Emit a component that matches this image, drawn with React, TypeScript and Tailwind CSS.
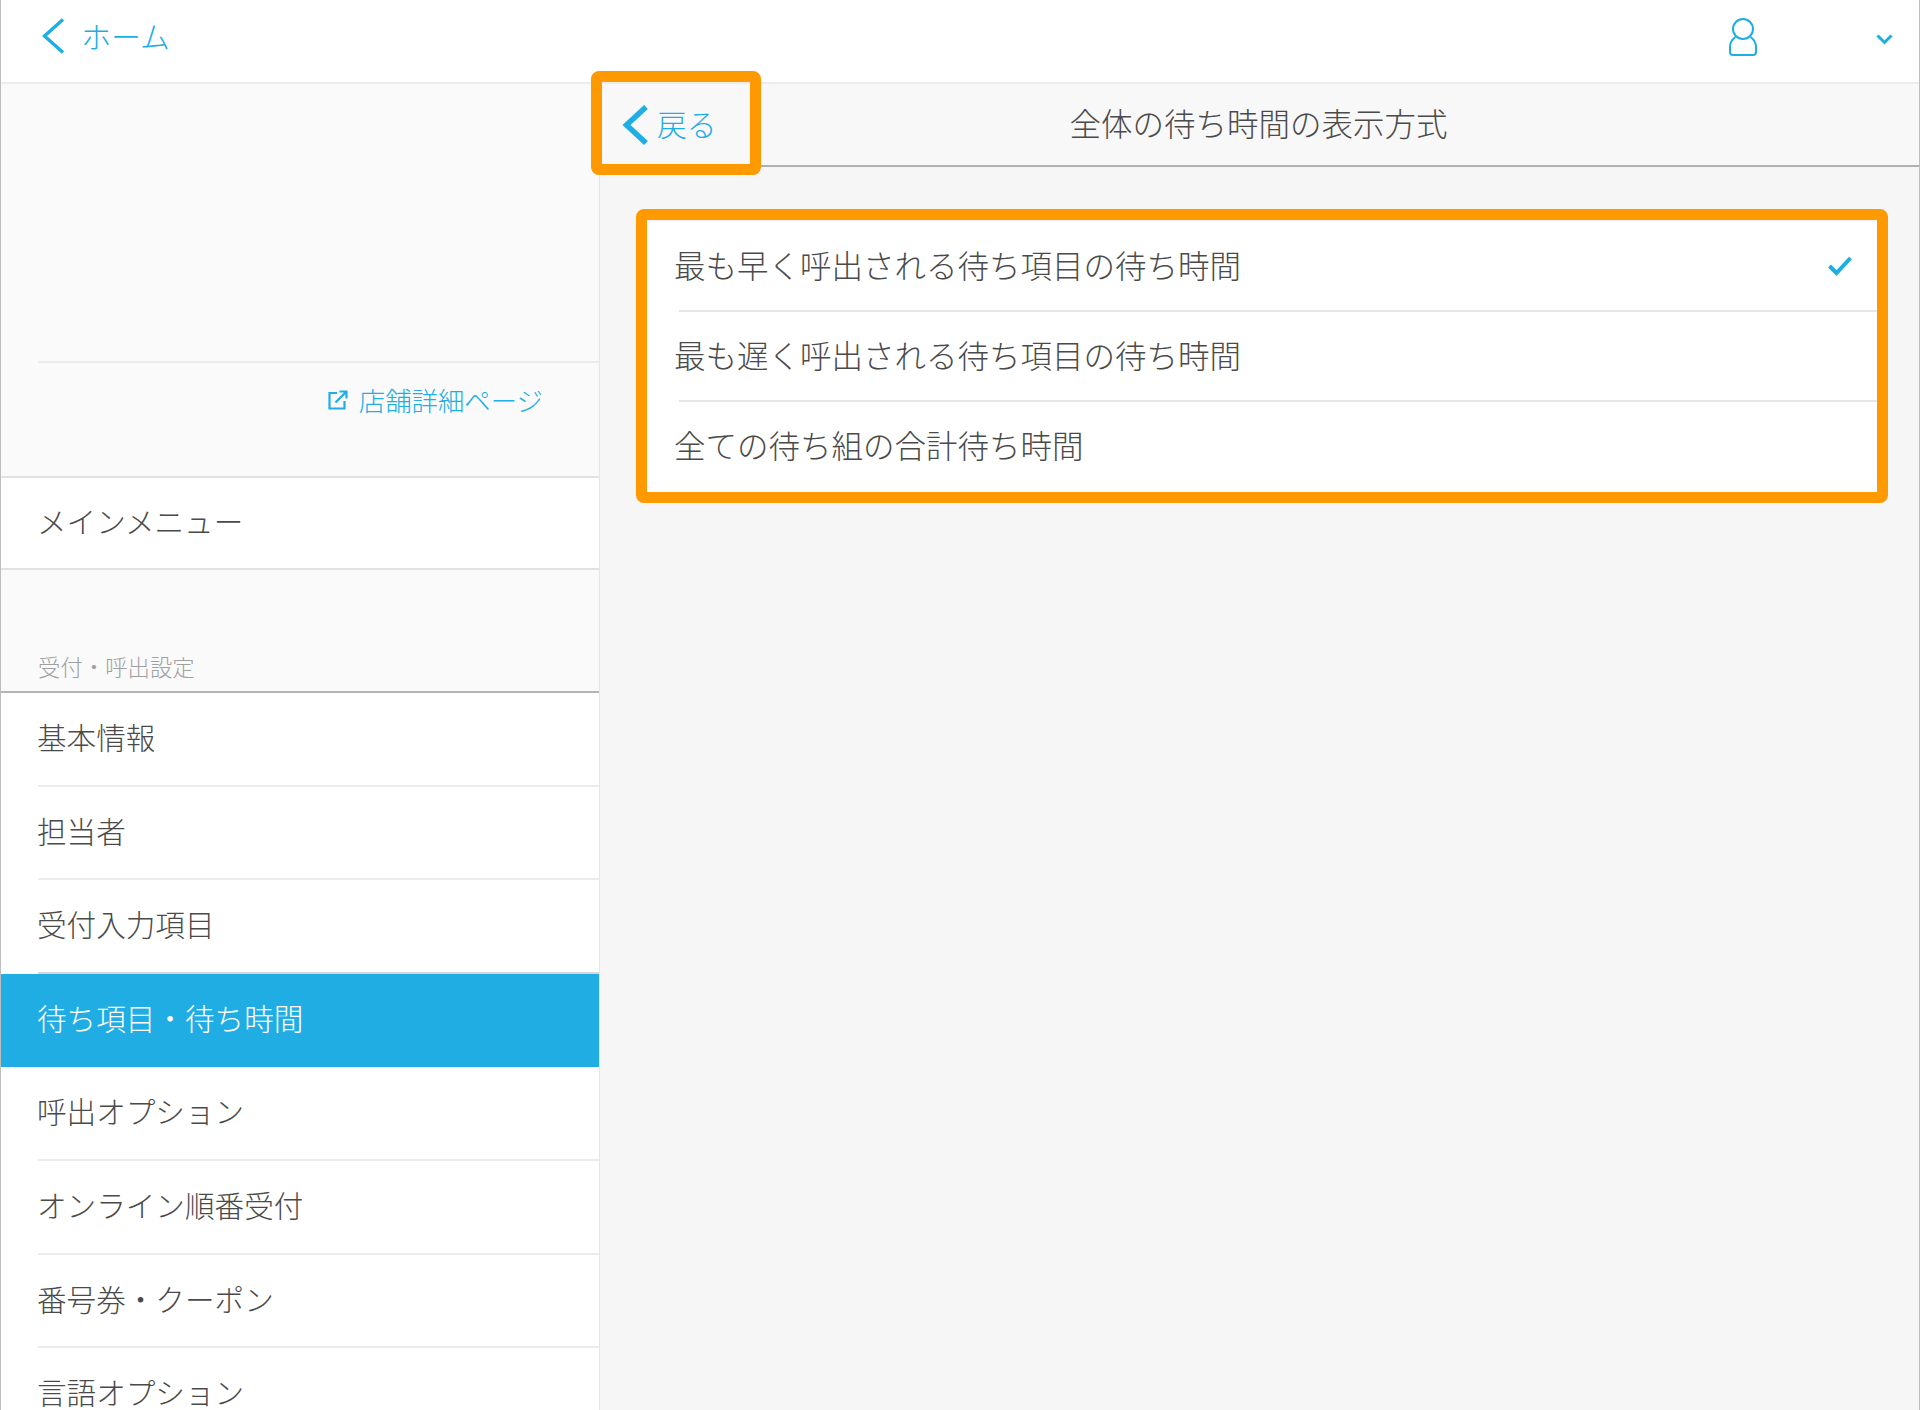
import React from "react";

const rows = ["基本情報", "担当者", "受付入力項目", "待ち項目・待ち時間", "呼出オプション", "オンライン順番受付", "番号券・クーポン", "言語オプション"];
const options = ["最も早く呼出される待ち項目の待ち時間", "最も遅く呼出される待ち項目の待ち時間", "全ての待ち組の合計待ち時間"];

export default function App() {
  return (
    <div className="relative w-[1920px] h-[1410px] overflow-hidden bg-white border-x border-[#bdbdbd] font-light text-[#4a4a4a] [font-family:'Noto_Sans_CJK_JP','Noto_Sans',sans-serif]">
      <header className="h-[84px] flex items-center justify-between border-b-2 border-[#ececec] bg-white">
        <a className="flex items-center pl-[40px] pb-[11px] text-[#1eade4] text-[30px]">
          <svg className="w-[24px] h-[36px]" viewBox="0 0 24 36" fill="none" stroke="#1eade4" strokeWidth="3.4">
            <path d="M22 1.5 L3.5 18 L22 34.5" />
          </svg>
          <span className="ml-[16px]">ホーム</span>
        </a>
        <div className="flex items-center pb-[10px]">
          <svg className="w-[32px] h-[40px] mb-[-2px]" viewBox="0 0 32 40" fill="none" stroke="#1eade4" strokeWidth="2">
            <circle cx="16" cy="12" r="10" />
            <path d="M8.5 20 C5 22.5 3 26 3 30 V35 C3 37 4 38 6 38 H26 C28 38 29 37 29 35 V30 C29 26 27 22.5 23.5 20" />
          </svg>
          <svg className="w-[17px] h-[11px] ml-[117px] mr-[26px] mt-[6px]" viewBox="0 0 17 11" fill="none" stroke="#1eade4" strokeWidth="3">
            <path d="M1.5 1.5 L8.5 8.5 L15.5 1.5" />
          </svg>
        </div>
      </header>
      <div className="flex h-[1326px]">
        <aside className="w-[599px] shrink-0 bg-[#fafafa] border-r border-[#e6e6e6] flex flex-col">
          <div className="h-[279px] shrink-0 flex flex-col justify-end">
            <div className="ml-[37px] border-b-2 border-[#ececec]" />
          </div>
          <div className="h-[113px] shrink-0 flex items-center justify-end pr-[56px] pb-[39px] text-[#1eade4] text-[26.4px]">
            <svg className="w-[20px] h-[20px] mr-[11px]" viewBox="0 0 20 20" fill="none" stroke="#1eade4" strokeWidth="2.2">
              <path d="M9 3 H1.5 V18.5 H16.5 V11" />
              <path d="M7.5 12.5 L18 2 M11.5 1.5 H18.5 V8.5" />
            </svg>
            <span>店舗詳細ページ</span>
          </div>
          <div className="h-[94px] shrink-0 bg-white border-y-2 border-[#e2e2e2] flex items-center pl-[36px] pb-[3px] text-[29.6px]">メインメニュー</div>
          <div className="h-[123px] shrink-0 flex items-end pl-[37px] pb-[7px] text-[22.4px] text-[#a0a0a0] border-b-2 border-[#b4b4b4]">受付・呼出設定</div>
          <ul className="bg-white text-[29.6px]">
            {rows.map((r, i) =>
              i === 3 ? (
                <li key={r} className="h-[93.6px] bg-[#1fade4] text-white flex items-center pl-[36px] pb-[4px]">{r}</li>
              ) : (
                <li key={r} className="h-[93.6px] flex flex-col">
                  <div className="flex-1 flex items-center pl-[36px] pb-[3px]">{r}</div>
                  <div className={i === 2 ? "ml-[37px] border-b-2 border-[#d8d8d8]" : "ml-[37px] border-b-2 border-[#ececec]"} />
                </li>
              )
            )}
          </ul>
        </aside>
        <main className="flex-1 bg-[#f6f6f6]">
          <div className="relative h-[83px] bg-[#f8f8f8] border-b-2 border-[#b0b0b0] flex items-center justify-center pb-[3px] text-[31.5px]">
            <a className="absolute left-[22px] top-[17px] flex items-center text-[#1eade4] text-[29.8px]">
              <svg className="w-[26px] h-[40px]" viewBox="0 0 26 40" fill="none" stroke="#1eade4" strokeWidth="5.5">
                <path d="M24 2 L4.5 20 L24 38" />
              </svg>
              <span className="ml-[9px] mb-[4px]">戻る</span>
            </a>
            <span className="-ml-[2px]">全体の待ち時間の表示方式</span>
          </div>
          <ul className="mt-[55px] ml-[47px] mr-[41px] bg-white text-[31.5px]">
            {options.map((o, i) => (
              <li key={o} className="h-[90px] flex flex-col">
                <div className={i === 2 ? "flex-1 flex items-center justify-between pl-[27px] pr-[26px] pb-[5px]" : "flex-1 flex items-center justify-between pl-[27px] pr-[26px] pb-[3px]"}>
                  <span>{o}</span>
                  {i === 0 && (
                    <svg className="w-[24px] h-[20px] mt-[2px]" viewBox="0 0 24 20" fill="none" stroke="#1eade4" strokeWidth="4">
                      <path d="M1.5 10 L8.5 17 L22.5 2" />
                    </svg>
                  )}
                </div>
                {i < 2 && <div className="ml-[32px] border-b-2 border-[#e6e6e6]" />}
              </li>
            ))}
          </ul>
        </main>
      </div>
      <div className="absolute left-[590px] top-[71px] w-[170px] h-[104px] border-[11px] border-[#ff9900] rounded-[8px] pointer-events-none" />
      <div className="absolute left-[635px] top-[209px] w-[1252px] h-[294px] border-[11px] border-[#ff9900] rounded-[8px] pointer-events-none" />
    </div>
  );
}
